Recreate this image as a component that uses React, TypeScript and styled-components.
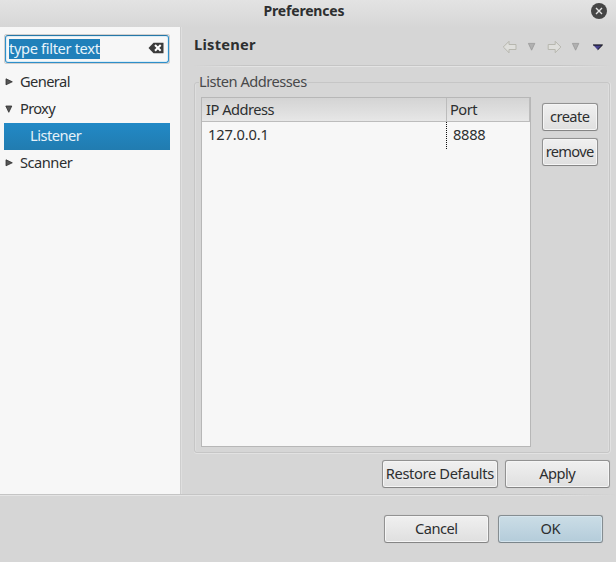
import React from "react";
import styled, { createGlobalStyle } from "styled-components";

const GlobalStyle = createGlobalStyle`
  * { box-sizing: border-box; }
  body { margin: 0; overflow: hidden; background: #d6d6d6; }
`;

const Window = styled.div`
  width: 616px;
  height: 562px;
  display: flex;
  flex-direction: column;
  background: linear-gradient(#e3e3e3 0, #d6d6d6 28px);
  color: #2d2f30;
  font: 14.67px/20px "Noto Sans", sans-serif;
  white-space: nowrap;
`;

const Text = styled.span<{ $track?: number }>`
  display: inline-block;
  letter-spacing: ${(p) => p.$track ?? -0.5}px;
  margin-right: ${(p) => -(p.$track ?? -0.5)}px;
`;

const TitleBar = styled.header`
  height: 27px;
  flex: none;
  display: grid;
  grid-template-columns: 30px 1fr 30px;
  align-items: start;
  font-size: 14px;
  font-weight: bold;
`;

const Title = styled.div`
  grid-column: 2;
  text-align: center;
  padding-top: 1px;
  margin-right: 8px;
`;

const CloseButton = styled.button`
  all: unset;
  width: 18px;
  height: 18px;
  margin: 2px 0 0 4px;
  display: flex;
`;

const Body = styled.main`
  height: 467px;
  flex: none;
  display: flex;
`;

const Sidebar = styled.aside`
  width: 180px;
  background: #f7f7f7;
  padding: 7px 10px 0 4px;
`;

const Sash = styled.div`
  width: 2px;
  background: linear-gradient(90deg, #cecece 50%, #dfdfdf 50%);
`;

const FilterField = styled.div`
  width: 166px;
  height: 30px;
  border: 1px solid #d2cfcd;
  border-radius: 2px;
  margin-bottom: 5px;
`;

const FilterInner = styled.div`
  height: 28px;
  border: 1px solid #2e8fca;
  border-top-color: #2677a7;
  border-radius: 3px;
  box-shadow: inset 0 0 0 1px #d8edf8;
  display: flex;
  align-items: center;
  justify-content: space-between;
  padding: 0 4px 0 3px;
`;

const Selection = styled.span`
  height: 20px;
  width: 91px;
  line-height: 18px;
  background: #2080ba;
  color: #e9f4fa;
`;

const ClearIcon = styled.svg`
  width: 16px;
  height: 12px;
  margin-bottom: 2px;
`;

const TreeRow = styled.div<{ $child?: boolean; $selected?: boolean }>`
  height: 27px;
  display: flex;
  align-items: center;
  padding: 0 0 3px ${(p) => (p.$child ? 26 : 1)}px;
  color: ${(p) => (p.$selected ? "#e6f2f9" : "inherit")};
  background: ${(p) => (p.$selected ? "linear-gradient(#2289c6, #217cb0)" : "none")};
`;

const Arrow = styled.svg`
  width: 8px;
  height: 8px;
  margin: 2px 7px 0 0;
  flex: none;
`;

const Page = styled.section`
  flex: 1;
  padding: 0 6px 0 12px;
`;

const PageHead = styled.div`
  height: 38px;
  display: flex;
  justify-content: space-between;
  align-items: center;
  font-size: 14.67px;
  font-weight: bold;
`;

const PageTitle = styled.div`
  margin-bottom: 5px;
`;

const NavIcons = styled.svg`
  width: 108px;
  height: 14px;
  margin-top: 2px;
`;

const Rule = styled.div`
  height: 2px;
  flex: none;
  background: linear-gradient(#c5c5c5 50%, #e4e4e4 50%);
`;

const FadedRule = styled(Rule)`
  mask-image: linear-gradient(90deg, transparent, #000 12%, #000 88%, transparent);
`;

const Group = styled.fieldset`
  width: 416px;
  height: 381px;
  margin: 5px 0 0;
  padding: 5px 11px 0 6px;
  border: 1px solid #c6c6c6;
  border-radius: 3px;
  box-shadow: inset -1px 0 #dedede, 0 1px #e2e2e2, 1px 0 #e2e2e2, inset 1px 0 #dedede;
  display: flex;
  justify-content: space-between;
`;

const GroupTitle = styled.legend`
  height: 20px;
  line-height: 18px;
  margin-left: -2px;
  padding: 0;
  color: #48494a;
`;

const Table = styled.div`
  width: 330px;
  height: 350px;
  background: #f7f7f7;
  border: 1px solid #b7b7b7;
`;

const HeaderRow = styled.div`
  height: 24px;
  display: grid;
  grid-template-columns: 245px 1fr;
  background: linear-gradient(#d4d4d4, #dddddd 50%, #e7e7e7);
  border-bottom: 1px solid #bcbcbc;
  border-right: 1px solid #bcbcbc;
`;

const HeaderCell = styled.div`
  padding: 1px 0 0 4px;
  & + & { border-left: 1px solid #bcbcbc; margin-left: -1px; padding-left: 3px; }
`;

const DataRow = styled.div`
  height: 27px;
  display: grid;
  grid-template-columns: 245px 1fr;
`;

const DataCell = styled.div`
  padding: 2px 0 0 6px;
  & + & {
    margin-left: -1px;
    padding-left: 7px;
    background: repeating-linear-gradient(#111 0 1px, transparent 1px 2px) left / 1px 100% no-repeat;
  }
`;

const ButtonStack = styled.div`
  display: flex;
  flex-direction: column;
  gap: 7px;
  padding-top: 6px;
`;

const Button = styled.button<{ $width: number; $primary?: boolean }>`
  width: ${(p) => p.$width}px;
  height: 28px;
  padding: 0 0 2px;
  display: flex;
  align-items: center;
  justify-content: center;
  font: inherit;
  color: inherit;
  border: 1px solid ${(p) => (p.$primary ? "#858d91" : "#929292")};
  border-bottom-color: ${(p) => (p.$primary ? "#7b858b" : "#858585")};
  border-radius: 3px;
  background: ${(p) => (p.$primary ? "linear-gradient(#cbdde6, #b4ccda)" : "linear-gradient(#f0f0f0, #dfdfdf)")};
  box-shadow: inset 0 0 0 1px ${(p) => (p.$primary ? "#d5e4ed" : "#f5f5f5")}, 0 0 1px #bababa;
`;

const PageActions = styled.div`
  display: flex;
  justify-content: flex-end;
  gap: 7px;
  margin-top: 7px;
`;

const Footer = styled.footer`
  display: flex;
  justify-content: flex-end;
  gap: 9px;
  padding: 19px 13px 0 0;
`;

const FooterRule = styled(Rule)`
  mask-image: linear-gradient(90deg, #000 88%, transparent);
`;

function TreeArrow({ open }: { open?: boolean }) {
  return (
    <Arrow viewBox="0 0 8 8">
      <path
        d={open ? "M.8 1h6L3.8 7.3z" : "M1 .8v6L7.3 3.8z"}
        fill="#565656"
        stroke="#303030"
        strokeWidth=".8"
      />
    </Arrow>
  );
}

export default function App() {
  return (
    <>
      <GlobalStyle />
      <Window>
        <TitleBar>
          <Title><Text $track={-0.2}>Preferences</Text></Title>
          <CloseButton aria-label="Close">
            <svg width="18" height="18" viewBox="0 0 18 18">
              <circle cx="9" cy="9" r="8" fill="#454545" />
              <path d="M6 6l6 6M12 6l-6 6" stroke="#e5e5e5" strokeWidth="1.4" />
            </svg>
          </CloseButton>
        </TitleBar>
        <Body>
          <Sidebar>
            <FilterField>
              <FilterInner>
                <Selection><Text $track={-0.35}>type filter text</Text></Selection>
                <ClearIcon viewBox="0 0 16 12">
                  <path d="M.5 6L5.5.7H15.5v10.6h-10z" fill="#3b3b3b" />
                  <path d="M7 3l5.7 5.8M12.7 3L7 8.8" stroke="#fff" strokeWidth="2" />
                </ClearIcon>
              </FilterInner>
            </FilterField>
            <TreeRow><TreeArrow /><Text $track={-0.6}>General</Text></TreeRow>
            <TreeRow><TreeArrow open /><Text $track={-0.7}>Proxy</Text></TreeRow>
            <TreeRow $child $selected><Text>Listener</Text></TreeRow>
            <TreeRow><TreeArrow /><Text>Scanner</Text></TreeRow>
          </Sidebar>
          <Sash />
          <Page>
            <PageHead>
              <PageTitle><Text $track={0.25}>Listener</Text></PageTitle>
              <NavIcons viewBox="0 0 108 14">
                <g fill="#dfdfdc" stroke="#b7b7af">
                  <path d="M1.3 7L7 1.3V4.5h7v5H7v3.2z" />
                  <path d="M58.9 7l-5.7-5.7v3.2h-7v5h7v3.2z" />
                </g>
                <g fill="#b0b0b0" stroke="#989898" strokeWidth=".8">
                  <path d="M26.4 3.4h6.4l-3.2 6.8z" />
                  <path d="M70.4 3.4h6.4l-3.2 6.8z" />
                </g>
                <path d="M91 4.7h9.5L95.8 10z" fill="#46418c" />
                <path d="M91 5h9.5L95.8 9.7" fill="none" stroke="#111" strokeWidth="1" />
              </NavIcons>
            </PageHead>
            <FadedRule />
            <Group>
              <GroupTitle><Text>Listen Addresses</Text></GroupTitle>
              <Table>
                <HeaderRow>
                  <HeaderCell><Text>IP Address</Text></HeaderCell>
                  <HeaderCell><Text>Port</Text></HeaderCell>
                </HeaderRow>
                <DataRow>
                  <DataCell><Text $track={-0.15}>127.0.0.1</Text></DataCell>
                  <DataCell><Text $track={-0.3}>8888</Text></DataCell>
                </DataRow>
              </Table>
              <ButtonStack>
                <Button $width={56}><Text $track={-0.6}>create</Text></Button>
                <Button $width={56}><Text $track={-0.7}>remove</Text></Button>
              </ButtonStack>
            </Group>
            <PageActions>
              <Button $width={116}><Text $track={-0.35}>Restore Defaults</Text></Button>
              <Button $width={105}><Text>Apply</Text></Button>
            </PageActions>
          </Page>
        </Body>
        <FooterRule />
        <Footer>
          <Button $width={105}><Text>Cancel</Text></Button>
          <Button $width={105} $primary><Text>OK</Text></Button>
        </Footer>
      </Window>
    </>
  );
}
